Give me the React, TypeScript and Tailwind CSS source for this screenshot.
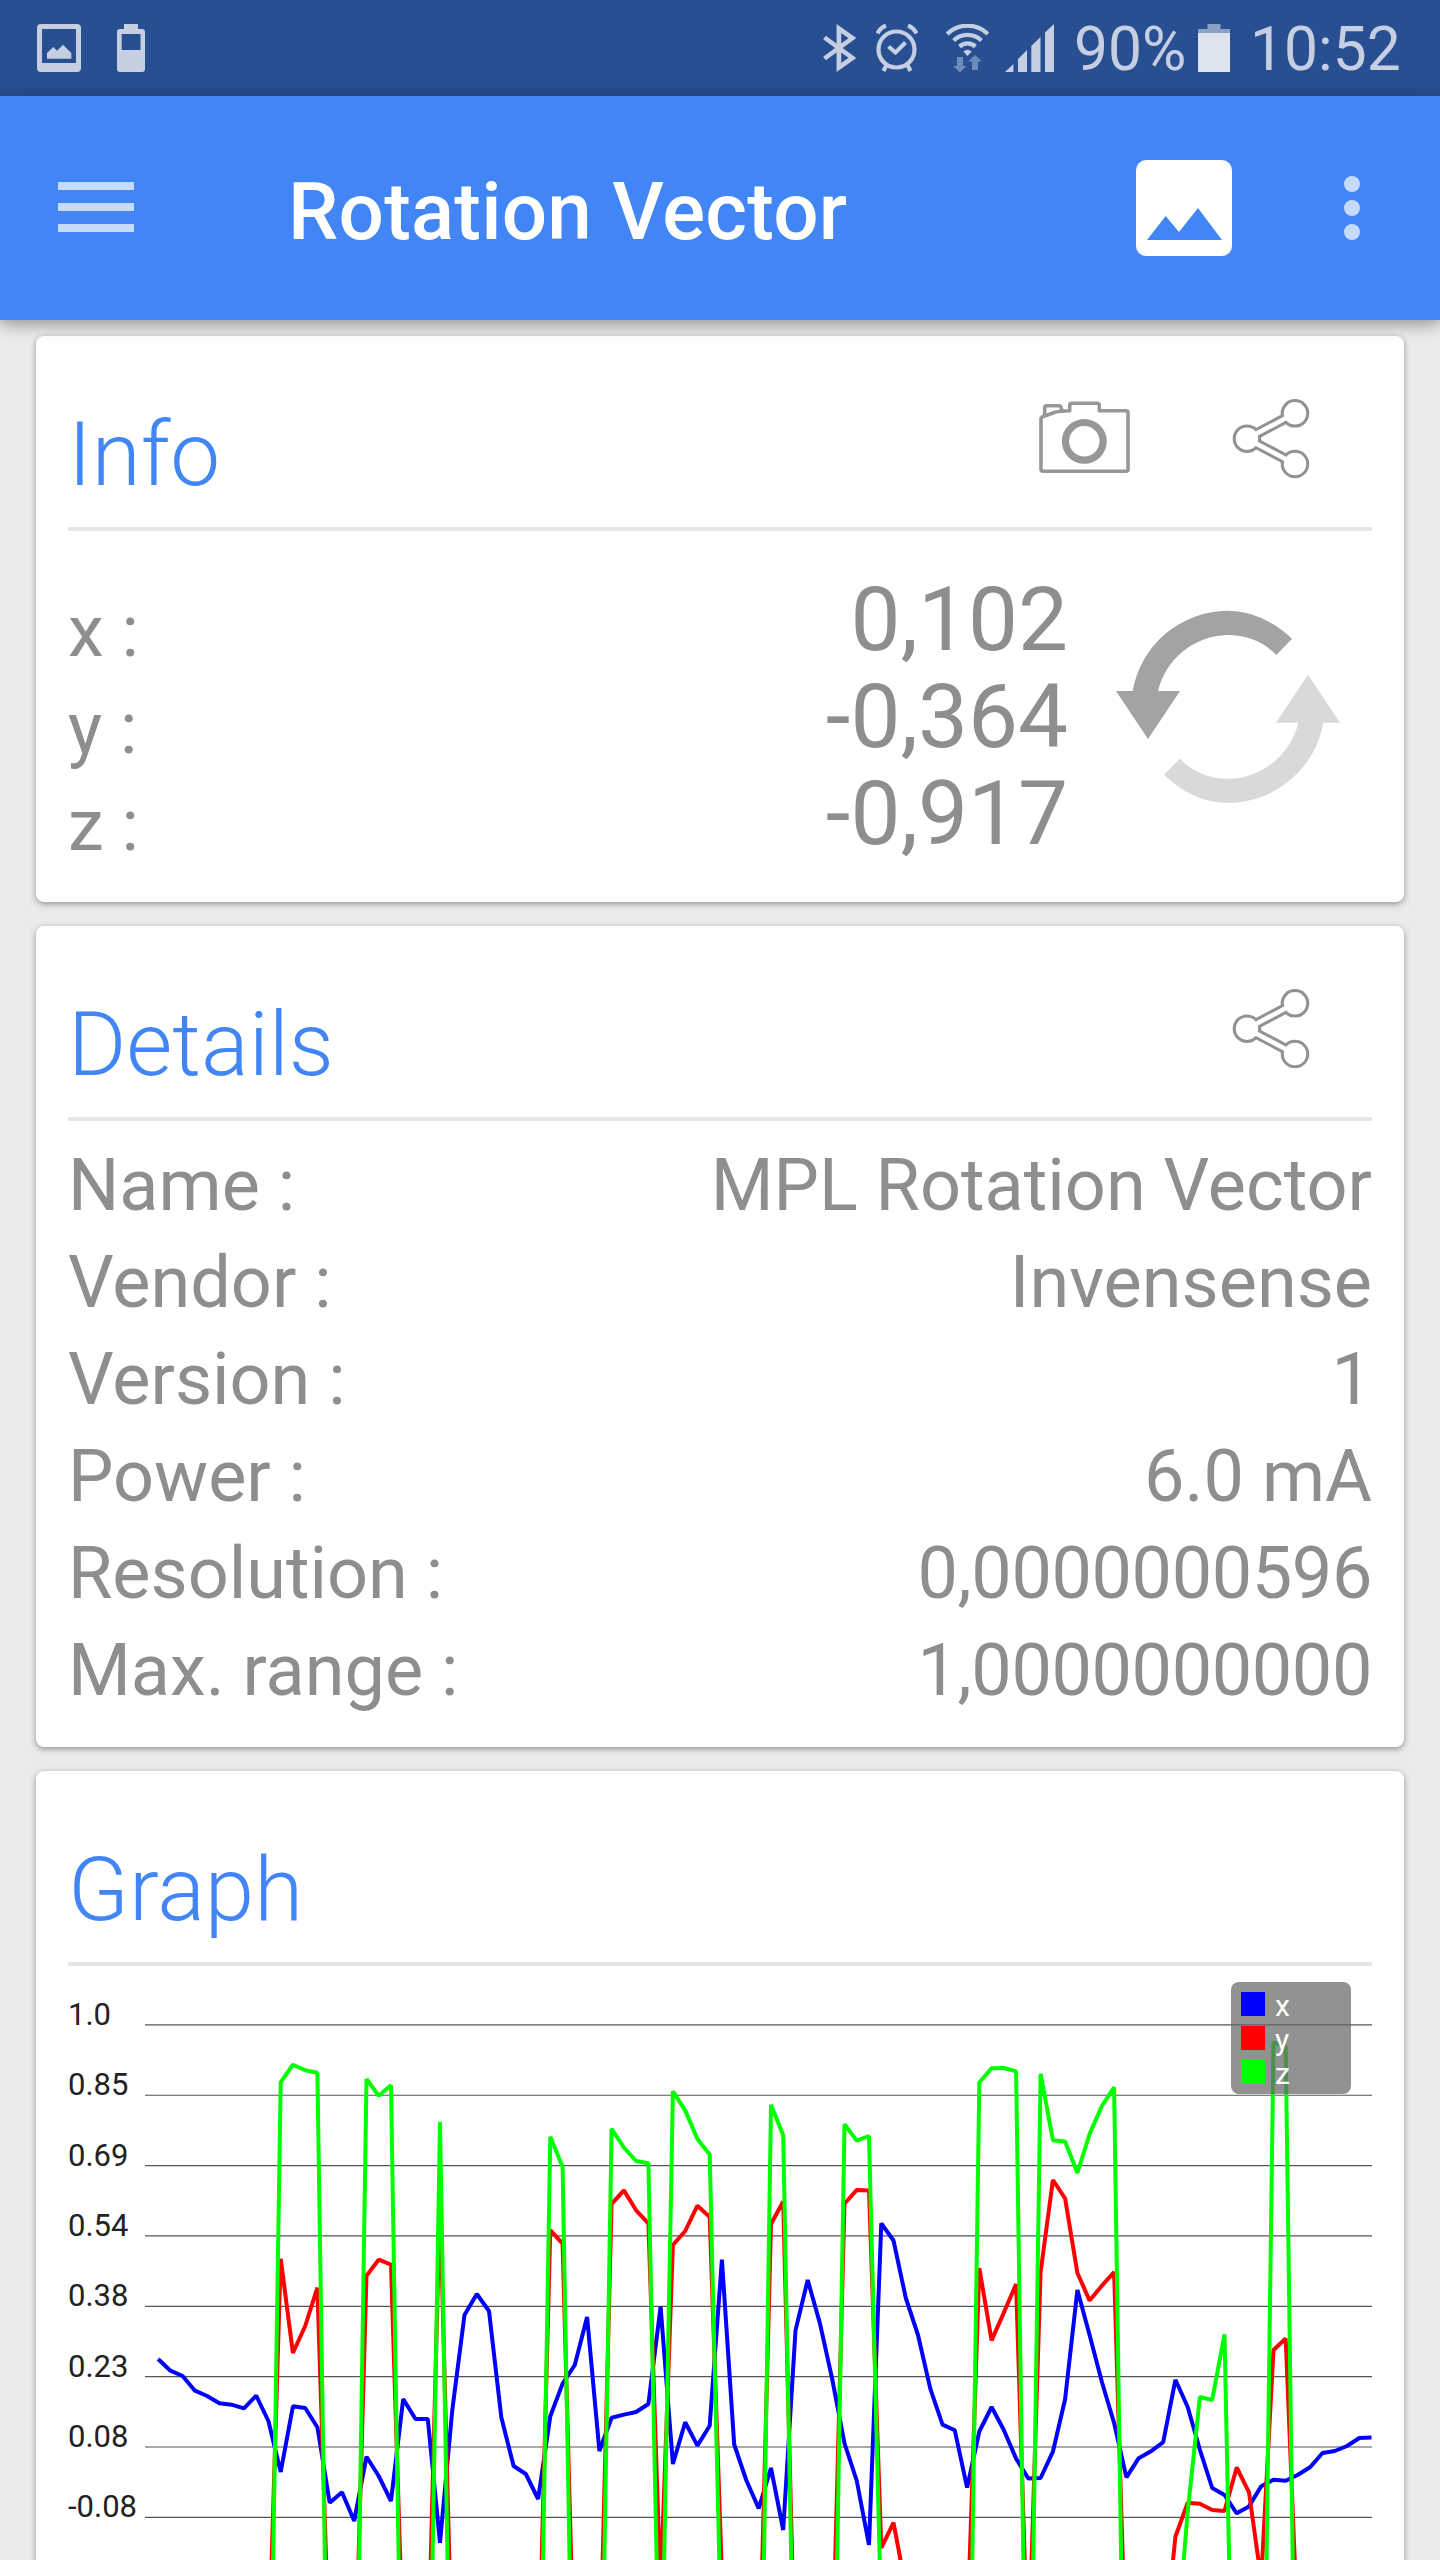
import type { ReactNode } from 'react';

const DETAILS = [
  { label: 'Name :', value: 'MPL Rotation Vector' },
  { label: 'Vendor :', value: 'Invensense' },
  { label: 'Version :', value: '1' },
  { label: 'Power :', value: '6.0 mA' },
  { label: 'Resolution :', value: '0,0000000596', numeric: true },
  { label: 'Max. range :', value: '1,0000000000', numeric: true },
];

const READINGS = [
  { axis: 'x', value: '0,102' },
  { axis: 'y', value: '-0,364' },
  { axis: 'z', value: '-0,917' },
];

const GRID_LABELS = ['1.0', '0.85', '0.69', '0.54', '0.38', '0.23', '0.08', '-0.08'];
const GRID_TOP = 2024.9;
const GRID_STEP = 70.35;

// one sample every STEP units, starting at START
const START = 158.1;
const STEP = 12.257;

type Point = [number, number];

const X_SAMPLES = [
  2359, 2370.7, 2376, 2390.7, 2396, 2403.3, 2404.7, 2408.3, 2395.7, 2421,
  2472, 2406.3, 2408, 2427.3, 2502.7, 2492.3, 2521, 2456.7, 2476, 2501,
  2399, 2419, 2419, 2542.7, 2410, 2315, 2294, 2311, 2417.3, 2466,
  2474, 2499, 2416.2, 2383.6, 2365, 2317, 2451, 2417.7, 2414.6, 2412,
  2404, 2306.7, 2464, 2422.3, 2445.6, 2425.7, 2259.6, 2444.5, 2480.5, 2508.4,
  2468, 2530, 2330.4, 2280, 2323.6, 2379, 2443.3, 2480.5, 2545, 2223.3,
  2240.5, 2298, 2335, 2388.6, 2424.6, 2430.3, 2487.7, 2431.5, 2407, 2430,
  2458.6, 2478.5, 2478, 2451.7, 2399.3, 2290, 2335, 2382, 2423, 2477.4,
  2458.2, 2451.3, 2442.2, 2379.8, 2407, 2449.8, 2488, 2495, 2513.3, 2506.4,
  2486.2, 2479.7, 2480.8, 2474.7, 2467, 2453, 2451, 2446, 2438, 2437.6,
];

// y and z keep only the samples around the visible peaks
const Y_SAMPLES: Point[] = [
  [9, 2669], [10, 2258.7], [11, 2353], [12, 2326], [13, 2287.7], [14, 2672],
  [16, 2711], [17, 2275.7], [18, 2259.7], [19, 2264.7], [20, 2653],
  [22, 2674], [23, 2200], [24, 2674],
  [31, 2697], [32, 2230.2], [33, 2243.6], [34, 2691],
  [36, 2689], [37, 2203.8], [38, 2190.4], [39, 2210.3], [40, 2223.3], [41, 2590],
  [42, 2245], [43, 2231], [44, 2205.7], [45, 2217], [46, 2575], [47, 2680],
  [49, 2699], [50, 2224], [51, 2201.5], [52, 2690],
  [55, 2675], [56, 2203.8], [57, 2190], [58, 2190.4], [59, 2548], [60, 2522.6], [61, 2588],
  [66, 2638], [67, 2268], [68, 2340.4], [69, 2312.8], [70, 2284], [71, 2674],
  [71, 2664], [72, 2272], [73, 2180], [74, 2198.4], [75, 2273], [76, 2300.6], [77, 2285.7], [78, 2272], [79, 2679],
  [82, 2658], [83, 2536.7], [84, 2502.7], [85, 2503.8], [86, 2510], [87, 2511], [88, 2467.5], [89, 2492.3],
  [90, 2580], [91, 2350], [92, 2338.5], [93, 2640],
];

const Z_SAMPLES: Point[] = [
  [9, 2863], [10, 2082.3], [11, 2064.7], [12, 2070.3], [13, 2072.7], [14, 2873],
  [16, 2887], [17, 2079], [18, 2095.7], [19, 2085.3], [20, 2840],
  [22, 2838], [23, 2121.7], [24, 2838],
  [31, 2847], [32, 2136.8], [33, 2166.7], [34, 2855],
  [36, 2853], [37, 2128.8], [38, 2147.5], [39, 2161], [40, 2163.2], [41, 2750],
  [42, 2091.3], [43, 2110.4], [44, 2139], [45, 2154.4], [46, 2669], [47, 2850],
  [49, 2901], [50, 2104.7], [51, 2135.3], [52, 2786],
  [55, 2856], [56, 2124.2], [57, 2140.6], [58, 2136], [59, 2622], [60, 2850],
  [66, 2920], [67, 2082.5], [68, 2068.3], [69, 2068], [70, 2071.4], [71, 2892],
  [72, 2073.7], [73, 2140.2], [74, 2141.4], [75, 2173], [76, 2134], [77, 2106], [78, 2087.4], [79, 2914],
  [82, 2850], [83, 2661], [84, 2511.5], [85, 2397], [86, 2400], [87, 2334.3], [88, 2927],
  [90, 2960], [91, 2042.3], [92, 2046.5], [93, 2946],
];

function toPoints(samples: Point[]) {
  return samples.map(([i, y]) => `${(START + i * STEP).toFixed(1)},${y}`).join(' ');
}

function StatusBar() {
  return (
    <div className="flex h-24 items-center bg-[#284f92] pl-[37px] pr-[38px] text-[#c6cfe2]">
      <svg className="h-12 w-[44px]" viewBox="0 0 44 48" fill="currentColor">
        <path fillRule="evenodd" d="M4 0H40Q44 0 44 4V44Q44 48 40 48H4Q0 48 0 44V4Q0 0 4 0ZM5 5V39H39V5Z" />
        <path d="M10 34.7V29L16.300 23L20 26.700L26 20.700L34.300 29V34.700Z" />
      </svg>
      <svg className="ml-9 h-12 w-7" viewBox="0 0 28 48" fill="currentColor">
        <path fillRule="evenodd" d="M7 0H21V5H25Q28 5 28 8V45Q28 48 25 48H3Q0 48 0 45V8Q0 5 3 5H7ZM4.700 10V26H23.500V10Z" />
      </svg>

      <svg className="ml-auto h-12 w-[33px]" viewBox="0 0 33 48" fill="none" stroke="currentColor" strokeWidth="4.6">
        <path d="M1.500 13.500L29.500 34L15.900 43.500V4.500L29.500 14L1.500 34.500" />
      </svg>
      <svg className="ml-5 h-12 w-[42px]" viewBox="0 0 42 48" fill="none" stroke="currentColor" strokeWidth="4.2">
        <circle cx="20.500" cy="25.500" r="18" />
        <path d="M1.500 9.500Q4 4 10 1.500M40.500 9.500Q38 4 32 1.500M10.500 41L7.500 47M31.500 41L34.500 47" />
        <path d="M12.500 22.500L19.500 28.500L29.500 18.500" />
      </svg>
      <svg className="ml-7 h-12 w-[43px]" viewBox="0 0 43 48" fill="none" stroke="currentColor" strokeWidth="4.2">
        <path d="M1.200 10A29 29 0 0 1 41.800 10M7.600 16.500A20 20 0 0 1 35.400 16.500M13.600 22.600A11.500 11.500 0 0 1 29.400 22.600" />
        <path d="M21.500 32L17.300 27.500Q21.500 24 25.700 27.500Z" fill="currentColor" stroke="none" />
        <path d="M11 33H17V42H20.500L14 48.500L7 42H11ZM26 46V37.500H22L29 31L36 37.500H32V46Z" fill="#6f8abb" stroke="none" />
      </svg>
      <svg className="ml-4 h-12 w-[49px]" viewBox="0 0 49 48" fill="currentColor">
        <path d="M0 48L8.400 40V48ZM13 35L22 26V48H13ZM26.300 22L35.500 13V48H26.300ZM40 8.500L49 0V48H40Z" />
      </svg>
      <span className="ml-[20px] w-[124px] pt-1 text-[60.5px] leading-none">90%</span>
      <svg className="h-12 w-8" viewBox="0 0 32 48">
        <path d="M9.500 0H22.500V5H32V9H0V5H9.500Z" fill="#8ba0c5" />
        <path d="M0 9H32V48H0Z" fill="#dde4ef" />
      </svg>
      <span className="ml-[20px] w-[152px] pt-1 text-[60.5px] leading-none">10:52</span>
    </div>
  );
}

function AppBar() {
  return (
    <div className="relative z-10 flex h-56 items-center bg-[#4285f4] pl-[58px] pr-20 shadow-[0_4px_16px_rgba(0,0,0,0.4)]">
      <div className="flex flex-col gap-[13px] pb-[2px]">
        <div className="h-2 w-[76px] bg-[#c6dafc]" />
        <div className="h-2 w-[76px] bg-[#c6dafc]" />
        <div className="h-2 w-[76px] bg-[#c6dafc]" />
      </div>
      <h1 className="ml-[154px] pt-2 text-[80px] leading-none font-medium tracking-[0.2px] text-white">Rotation Vector</h1>
      <svg className="ml-auto h-24 w-24" viewBox="0 0 96 96">
        <rect width="96" height="96" rx="10" fill="#fff" />
        <path d="M11 80L29.700 56L43 72L62 48L86 80Z" fill="#4285f4" />
      </svg>
      <div className="ml-[112px] flex flex-col gap-2">
        <div className="h-4 w-4 rounded-full bg-[#c6dafc]" />
        <div className="h-4 w-4 rounded-full bg-[#c6dafc]" />
        <div className="h-4 w-4 rounded-full bg-[#c6dafc]" />
      </div>
    </div>
  );
}

function CameraIcon() {
  return (
    <svg className="mt-[63px] h-[77px] w-[94px]" viewBox="0 0 94 77" fill="none" stroke="#979797" strokeWidth="3.6" strokeLinejoin="round">
      <path d="M3 20Q3 18.200 6 17.300L17 13.300Q22 11.700 31.700 11.700V6.300Q31.700 4.300 34 4.300H59Q61.300 4.300 61.300 6.300V11.700H88Q90 11.700 90 13.700V70.300Q90 72.300 88 72.300H5Q3 72.300 3 70.300Z" />
      <path d="M6.700 17V9Q6.700 6.700 8.500 6.700H20.500Q23 6.700 23.300 9L24 12" />
      <circle cx="46.300" cy="42.300" r="18.800" strokeWidth="7.200" />
    </svg>
  );
}

function ShareIcon() {
  return (
    <svg className="mt-[60px] h-[86px] w-[82px]" viewBox="0 0 82 86">
      <g fill="#929292" stroke="#929292">
        <path d="M65 17.300L17 42.700L65 68" fill="none" strokeWidth="10.600" />
        <circle cx="17" cy="42.700" r="14.300" stroke="none" />
        <circle cx="65" cy="17.300" r="14.300" stroke="none" />
        <circle cx="65" cy="68" r="14.300" stroke="none" />
      </g>
      <g fill="#fff" stroke="#fff">
        <path d="M65 17.300L17 42.700L65 68" fill="none" strokeWidth="4.600" />
        <circle cx="17" cy="42.700" r="11.200" stroke="none" />
        <circle cx="65" cy="17.300" r="11.200" stroke="none" />
        <circle cx="65" cy="68" r="11.200" stroke="none" />
      </g>
    </svg>
  );
}

function RefreshIcon() {
  return (
    <svg className="mt-[78px] h-[196px] w-[226px]" viewBox="0 0 226 196">
      <path
        fill="#a3a3a3"
        d="M1 82H17.700A97 97 0 0 1 112 1.700Q147 1.700 177 29.700L161.300 46Q142 26 112.300 26A73 73 0 0 0 43 82H65L33 130Z"
      />
      <path
        fill="#d9d9d9"
        d="M225 113.700H208.300A97 97 0 0 1 114 194Q78 194 49 165.700L65 149.700Q84 169.700 113.500 169.700A73 73 0 0 0 183.300 113.700H161L193 65.700Z"
      />
    </svg>
  );
}

interface CardProps {
  title: string;
  actions?: ReactNode;
  children: ReactNode;
  className?: string;
}

function Card({ title, actions, children, className = '' }: CardProps) {
  return (
    <section className={`shrink-0 rounded-lg bg-white px-8 shadow-[0_2px_6px_rgba(0,0,0,0.38)] ${className}`}>
      <header className="flex h-[195px] items-start border-b-4 border-[#e5e5e5] pr-[60px]">
        <h2 className="pt-[71px] text-[89px] leading-[96px] font-light text-[#4285f4]">{title}</h2>
        <div className="ml-auto flex gap-[98px]">{actions}</div>
      </header>
      {children}
    </section>
  );
}

function Chart() {
  return (
    <div className="relative">
      <svg className="block h-[594px] w-[1304px]" viewBox="68 1966 1304 594" fill="none">
        {GRID_LABELS.map((label, i) => (
          <g key={label}>
            <path d={`M145 ${GRID_TOP + i * GRID_STEP}H1372`} stroke="#555" strokeWidth="1.200" />
            <text x="68" y={GRID_TOP + i * GRID_STEP} fill="#222" fontSize="31">
              {label}
            </text>
          </g>
        ))}
        <g strokeWidth="4" strokeLinejoin="bevel">
          <polyline points={toPoints(X_SAMPLES.map((y, i): Point => [i, y]))} stroke="#00f" />
          <polyline points={toPoints(Y_SAMPLES)} stroke="#f00" />
          <polyline points={toPoints(Z_SAMPLES)} stroke="#0f0" />
        </g>
      </svg>
      <div className="absolute top-4 right-[21px] flex h-[112px] w-[120px] flex-col gap-[10px] rounded-lg bg-[#676767]/72 pt-[10px] pl-[10px] text-[30px] text-white">
        <div className="flex h-6 items-center gap-[10px]">
          <div className="h-6 w-6 bg-[#00f]" />
          <span className="pt-[4px] leading-6">x</span>
        </div>
        <div className="flex h-6 items-center gap-[10px]">
          <div className="h-6 w-6 bg-[#f00]" />
          <span className="pt-[4px] leading-6">y</span>
        </div>
        <div className="flex h-6 items-center gap-[10px]">
          <div className="h-6 w-6 bg-[#0f0]" />
          <span className="pt-[4px] leading-6">z</span>
        </div>
      </div>
    </div>
  );
}

export default function App() {
  return (
    <div className="h-[2560px] w-[1440px] overflow-hidden bg-[#ebebeb] font-['Roboto',sans-serif] text-[#8e8e8e]">
      <StatusBar />
      <AppBar />
      <main className="flex flex-col gap-6 px-9 pt-4">
        <Card
          title="Info"
          actions={
            <>
              <CameraIcon />
              <ShareIcon />
            </>
          }
          className="h-[566px]"
        >
          <div className="flex">
            <div className="pt-[52px] text-[72px] leading-[97px]">
              {READINGS.map((r) => (
                <div key={r.axis}>{r.axis} :</div>
              ))}
            </div>
            <div className="ml-auto pt-[40px] text-right text-[89px] leading-[97px]">
              {READINGS.map((r) => (
                <div key={r.axis}>{r.value}</div>
              ))}
            </div>
            <div className="mr-[31px] ml-[47px]">
              <RefreshIcon />
            </div>
          </div>
        </Card>

        <Card title="Details" actions={<ShareIcon />} className="h-[821px]">
          <dl className="pt-4 text-[72px] leading-[97px]">
            {DETAILS.map((row) => (
              <div key={row.label} className="flex justify-between">
                <dt>{row.label}</dt>
                <dd className={row.numeric ? 'tracking-[-0.4px]' : ''}>{row.value}</dd>
              </div>
            ))}
          </dl>
        </Card>

        <Card title="Graph" className="pb-8">
          <Chart />
        </Card>
      </main>
    </div>
  );
}
